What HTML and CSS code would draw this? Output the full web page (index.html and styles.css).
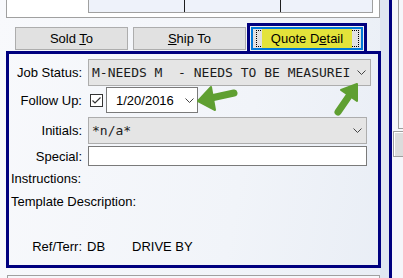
FILE: index.html
```html
<!DOCTYPE html>
<html lang="en">
<head>
  <meta charset="UTF-8" />
  <meta name="viewport" content="width=device-width, initial-scale=1.0" />
  <title>Quote Detail</title>
  <link rel="stylesheet" href="styles.css">
</head>
<body>
  <div class="window">
    <div class="main">
      <div class="top-panel">
        <div class="top-grid">
          <div class="cell"></div>
          <div class="cell"></div>
          <div class="cell last"></div>
        </div>
      </div>

      <div class="tabs">
        <button class="tab tab-sold">Sold <u>T</u>o</button>
        <button class="tab tab-ship"><u>S</u>hip To</button>
        <div class="tab-active">
          <div class="tab-focus">
            <span class="tab-label">Quote D<u>e</u>tail</span>
          </div>
        </div>
      </div>

      <div class="panel">
        <div class="form">
          <div class="lbl row-job">Job Status:</div>
          <div class="combo combo-job row-job">
            <span class="combo-text">M-NEEDS M  - NEEDS TO BE MEASUREI</span>
            <svg class="chev" width="9" height="5" viewBox="0 0 9 5"><polyline points="0.5,0.5 4.5,4.5 8.5,0.5" /></svg>
          </div>

          <div class="lbl row-follow">Follow Up:</div>
          <div class="follow row-follow">
            <span class="check">
              <svg width="11" height="11" viewBox="0 0 11 11"><polyline points="1.5,5.5 4,8 9.5,2.5" /></svg>
            </span>
            <div class="date">
              <span class="date-text">1/20/2016</span>
              <svg class="chev" width="9" height="5" viewBox="0 0 9 5"><polyline points="0.5,0.5 4.5,4.5 8.5,0.5" /></svg>
            </div>
          </div>

          <div class="lbl row-init">Initials:</div>
          <div class="combo combo-init row-init">
            <span class="combo-text">*n/a*</span>
            <svg class="chev" width="9" height="5" viewBox="0 0 9 5"><polyline points="0.5,0.5 4.5,4.5 8.5,0.5" /></svg>
          </div>

          <div class="lbl row-special">Special:</div>
          <div class="text-box row-special"></div>

          <div class="full row-instr">Instructions:</div>
          <div class="full row-tmpl">Template Description:</div>

          <div class="lbl row-ref">Ref/Terr:</div>
          <div class="ref row-ref"><span class="ref-code">DB</span>DRIVE BY</div>
        </div>
      </div>

      <div class="next-panel"></div>
    </div>

    <div class="edge"></div>

    <div class="side">
      <div class="side-track"></div>
      <div class="side-btn"></div>
    </div>
  </div>

  <!-- annotation arrows drawn over the form -->
  <svg class="arrows" width="403" height="278" viewBox="0 0 403 278">
    <g fill="#5f9f31" stroke="#5f9f31" stroke-linejoin="round" stroke-width="2">
      <line x1="211" y1="98" x2="234" y2="93" stroke-width="7" stroke-linecap="round" />
      <polygon points="198,101 211,87 215,110" />
      <line x1="349" y1="96" x2="338" y2="112" stroke-width="7" stroke-linecap="round" />
      <polygon points="357,84 341,90 357,101" />
    </g>
  </svg>
</body>
</html>
```

FILE: styles.css
```css
body {
  margin: 0;
  font-family: "Liberation Sans", Arial, sans-serif;
  font-size: 13px;
  color: #000;
  background: linear-gradient(100deg, #f8f9fc 0%, #f1f4f9 60%, #e8edf5 100%);
  overflow: hidden;
}
.window {
  display: flex;
  height: 278px;
}
.main {
  width: 389px;
  flex: none;
  background: linear-gradient(to right, transparent 380px, #dfe6f1 380px);
}

/* top grid panel */
.top-panel {
  margin-left: 6px;
  width: 372px;
  height: 17px;
  border: 1px solid #a0a0a0;
  border-top: none;
  background: #fff;
}
.top-grid {
  display: flex;
  margin-left: 81px;
  width: 283px;
  height: 12px;
  border: 1px solid #a0a0a0;
  border-top: none;
  background: #eef2fa;
}
.cell {
  width: 95px;
  border-right: 1px solid #1e1e1e;
}
.cell.last {
  flex: 1;
  border-right: none;
}

/* tab buttons */
.tabs {
  display: flex;
  align-items: flex-end;
  height: 33px;
  padding-left: 15px;
}
.tab {
  width: 113px;
  height: 23px;
  margin: 0 0 1px 0;
  padding: 0;
  border: 1px solid #adadad;
  background: #e1e1e1;
  font-family: "Liberation Sans", Arial, sans-serif;
  font-size: 13px;
  color: #000;
}
.tab-sold {
  margin-right: 5px;
}
.tab-ship {
  margin-right: 1px;
}
.tab-active {
  box-sizing: border-box;
  width: 120px;
  height: 28px;
  padding: 1px 1px 0 1px;
  border: 3px solid #00007f;
  border-bottom: none;
  background: #f0f0f0;
}
.tab-focus {
  position: relative;
  box-sizing: border-box;
  height: 23px;
  border: 2px solid #0078d7;
  background: #e1e1e1;
  display: flex;
  justify-content: center;
}
.tab-focus::before {
  content: "";
  position: absolute;
  top: 1px;
  bottom: 1px;
  left: 3px;
  right: 2px;
  border: 1px dotted #000;
}
.tab-label {
  position: relative;
  padding: 0 9px;
  line-height: 19px;
  background: #e3e33a;
}

/* main panel */
.panel {
  margin-left: 6px;
  width: 369px;
  height: 211px;
  border: 3px solid #00007f;
}
.form {
  display: grid;
  grid-template-columns: 73px 1fr;
  column-gap: 6px;
  align-items: center;
  padding-top: 5px;
}
.lbl {
  text-align: right;
  white-space: nowrap;
}
.full {
  grid-column: 1 / 3;
  padding-left: 2px;
  line-height: 15px;
}
.row-follow { margin-top: 1px; }
.row-init { margin-top: 4px; }
.row-special { margin-top: 2px; }
.row-instr { margin-top: 5px; }
.row-tmpl { margin-top: 8px; }
.row-ref { margin-top: 30px; line-height: 15px; }

.combo {
  box-sizing: border-box;
  display: flex;
  align-items: center;
  height: 27px;
  padding: 0 4px 0 3px;
  border: 1px solid #adadad;
  background: #e5e5e5;
}
.combo-job {
  width: 283px;
}
.combo-init {
  width: 279px;
}
.combo-text {
  flex: 1;
  overflow: hidden;
  white-space: pre;
  font-family: "DejaVu Sans Mono", "Liberation Mono", monospace;
  font-size: 13px;
  color: #1c1c1c;
}
.chev {
  flex: none;
}
.chev polyline {
  fill: none;
  stroke: #444;
  stroke-width: 1;
}

.follow {
  display: flex;
  align-items: center;
  height: 26px;
}
.check {
  box-sizing: border-box;
  width: 13px;
  height: 13px;
  margin-left: 2px;
  margin-right: 3px;
  border: 1px solid #333;
  background: #fff;
}
.check svg {
  display: block;
}
.check polyline {
  fill: none;
  stroke: #333;
  stroke-width: 1.2;
}
.date {
  box-sizing: border-box;
  display: flex;
  align-items: center;
  width: 92px;
  height: 26px;
  padding: 0 3px 0 9px;
  border: 1px solid #7a7a7a;
  background: #fff;
}
.date-text {
  flex: 1;
  font-size: 13px;
}

.text-box {
  box-sizing: border-box;
  width: 279px;
  height: 20px;
  border: 1px solid #7a7a7a;
  background: #fff;
}

.ref-code {
  display: inline-block;
  width: 45px;
  margin-left: -1px;
}

.next-panel {
  margin: 7px 0 0 7px;
  width: 371px;
  height: 10px;
  border: 1px solid #a0a0a0;
  border-bottom: none;
  background: #f6f7fb;
}

/* right edge */
.edge {
  width: 3px;
  flex: none;
  background: #00007f;
}
.side {
  flex: 1;
  background: #f5f6fa;
}
.side-track {
  margin-left: 6px;
  height: 128px;
  border-left: 1px solid #a0a0a0;
  border-bottom: 1px solid #a0a0a0;
}
.side-btn {
  box-sizing: border-box;
  margin: 2px 0 0 1px;
  height: 26px;
  border: 1px solid #a0a0a0;
  border-right: none;
  background: #dcdcdc;
  box-shadow: inset 1px 1px 0 #fff;
}

.arrows {
  position: absolute;
  left: 0;
  top: 0;
  pointer-events: none;
}
```
